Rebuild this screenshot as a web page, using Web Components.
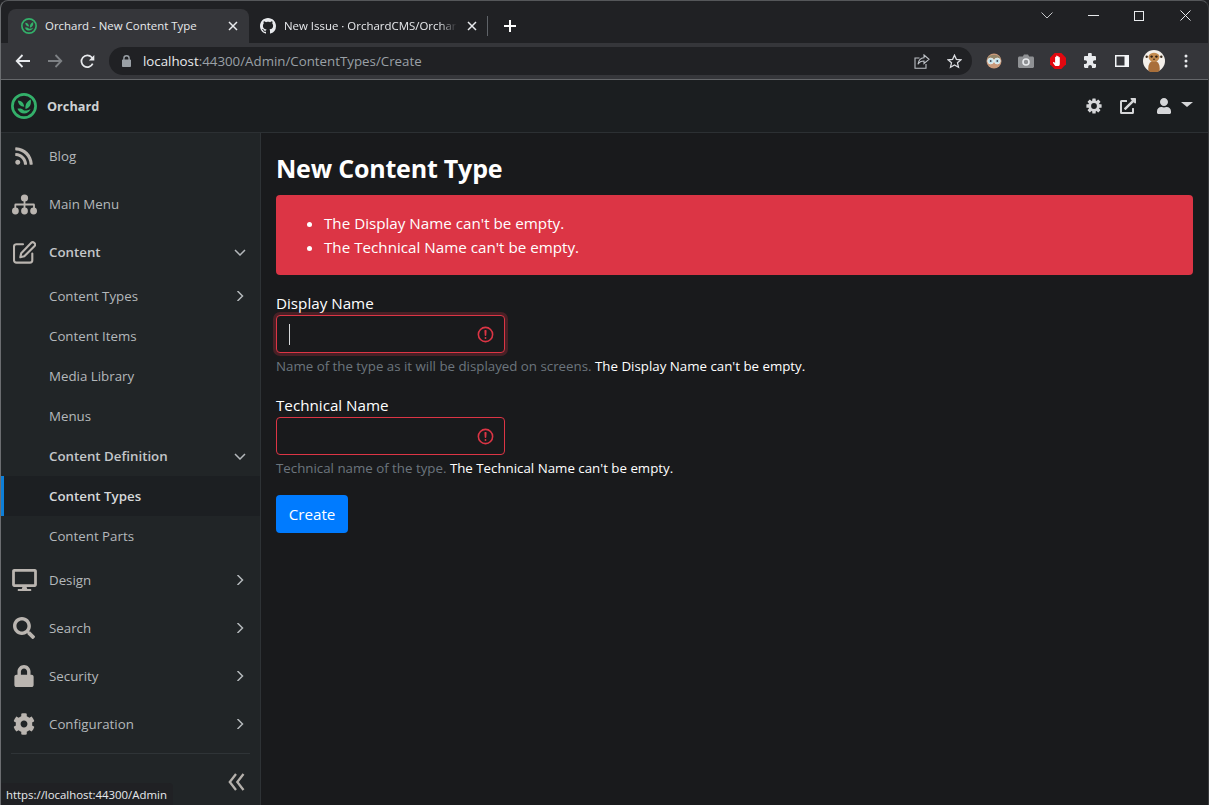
<!DOCTYPE html>
<html lang="en">
<head>
<meta charset="utf-8">
<title>Orchard - New Content Type</title>
<style>
  html, body { margin: 0; height: 100%; overflow: hidden; background: #202124; }
  body { font-family: "Open Sans", "Liberation Sans", sans-serif; }
</style>
</head>
<body>
<browser-window>
  <tab-strip></tab-strip>
  <browser-toolbar></browser-toolbar>
  <app-header></app-header>
  <div style="display:flex;flex:1;min-height:0">
    <side-nav>
      <nav-item icon="rss" label="Blog"></nav-item>
      <nav-item icon="sitemap" label="Main Menu"></nav-item>
      <nav-item icon="edit" label="Content" chevron="down" strong></nav-item>
      <nav-item sub label="Content Types" chevron="right"></nav-item>
      <nav-item sub label="Content Items"></nav-item>
      <nav-item sub label="Media Library"></nav-item>
      <nav-item sub label="Menus"></nav-item>
      <nav-item sub label="Content Definition" chevron="down" strong></nav-item>
      <nav-item sub label="Content Types" active strong></nav-item>
      <nav-item sub label="Content Parts"></nav-item>
      <nav-item icon="desktop" label="Design" chevron="right"></nav-item>
      <nav-item icon="search" label="Search" chevron="right"></nav-item>
      <nav-item icon="lock" label="Security" chevron="right"></nav-item>
      <nav-item icon="cog" label="Configuration" chevron="right"></nav-item>
    </side-nav>
    <content-page>
      <alert-box slot="alert">
        <li>The Display Name can't be empty.</li>
        <li>The Technical Name can't be empty.</li>
      </alert-box>
      <form-field label="Display Name" error="The Display Name can't be empty." focused>Name of the type as it will be displayed on screens.</form-field>
      <form-field label="Technical Name" error="The Technical Name can't be empty.">Technical name of the type.</form-field>
      <primary-button>Create</primary-button>
    </content-page>
  </div>
  <status-bubble>https://localhost:44300/Admin</status-bubble>
</browser-window>

<script>
const ICONS = {
  rss: ['0 0 448 512', '<path d="M128.081 415.959c0 35.369-28.672 64.041-64.041 64.041S0 451.328 0 415.959s28.672-64.041 64.041-64.041 64.04 28.673 64.04 64.041zm175.66 47.25c-8.354-154.6-132.185-278.587-286.95-286.95C7.656 175.765 0 183.105 0 192.253v48.069c0 8.415 6.49 15.472 14.887 16.018 111.832 7.284 201.473 96.702 208.772 208.772.547 8.397 7.604 14.887 16.018 14.887h48.069c9.149.001 16.489-7.655 15.995-16.79zm144.249.288C439.596 229.677 251.465 40.445 16.503 32.01 7.473 31.686 0 38.981 0 48.016v48.068c0 8.625 6.835 15.645 15.453 15.999 191.179 7.839 344.627 161.316 352.465 352.465.353 8.618 7.373 15.453 15.999 15.453h48.068c9.034-.001 16.329-7.474 16.005-16.504z"/>', 22, 20],
  sitemap: ['0 0 25 21', '<circle cx="12.5" cy="4" r="3.6"/><circle cx="3.4" cy="17" r="3.4"/><circle cx="12.5" cy="17" r="3.4"/><circle cx="21.6" cy="17" r="3.4"/><path d="M11.6 6h1.8v3.6h8.2a1.3 1.3 0 0 1 1.3 1.3V15h-1.8v-3.6h-7.7V15h-1.8v-3.6H4.2V15H2.4v-4.1a1.3 1.3 0 0 1 1.3-1.3h7.9z"/>', 25, 21],
  edit: ['0 0 23 23', '<path fill="none" stroke="currentColor" stroke-width="2.1" stroke-linecap="round" d="M10 3.3H3.4A2.4 2.4 0 0 0 1 5.7v13.5a2.4 2.4 0 0 0 2.4 2.4h13.5a2.4 2.4 0 0 0 2.4-2.4v-6.7"/><path fill="none" stroke="currentColor" stroke-width="2.1" stroke-linejoin="round" d="M18.3 1.7a1.9 1.9 0 0 1 2.7 0l.6.6a1.9 1.9 0 0 1 0 2.7L11.3 15.3l-4 .9.9-4z"/>', 23, 23],
  desktop: ['0 0 576 512', '<path d="M528 0H48C21.5 0 0 21.5 0 48v320c0 26.5 21.5 48 48 48h192l-16 48h-72c-13.3 0-24 10.7-24 24s10.7 24 24 24h272c13.3 0 24-10.7 24-24s-10.7-24-24-24h-72l-16-48h192c26.5 0 48-21.5 48-48V48c0-26.5-21.5-48-48-48zm-16 352H64V64h448v288z"/>', 25, 22],
  search: ['0 0 512 512', '<path d="M505 442.7L405.3 343c-4.5-4.5-10.6-7-17-7H372c27.6-35.3 44-79.7 44-128C416 93.1 322.9 0 208 0S0 93.1 0 208s93.1 208 208 208c48.3 0 92.7-16.4 128-44v16.3c0 6.4 2.5 12.5 7 17l99.7 99.7c9.4 9.4 24.6 9.4 33.9 0l28.3-28.3c9.4-9.4 9.4-24.6.1-34zM208 336c-70.7 0-128-57.2-128-128 0-70.7 57.2-128 128-128 70.7 0 128 57.2 128 128 0 70.7-57.2 128-128 128z"/>', 22, 22],
  lock: ['0 0 448 512', '<path d="M400 224h-24v-72C376 68.2 307.8 0 224 0S72 68.2 72 152v72H48c-26.5 0-48 21.5-48 48v192c0 26.5 21.5 48 48 48h352c26.5 0 48-21.5 48-48V272c0-26.5-21.5-48-48-48zm-104 0H152v-72c0-39.7 32.3-72 72-72s72 32.3 72 72v72z"/>', 20, 22],
  cog: ['0 0 512 512', '<path d="M487.4 315.7l-42.6-24.6c4.3-23.2 4.3-47 0-70.2l42.6-24.6c4.9-2.8 7.1-8.6 5.5-14-11.1-35.6-30-67.8-54.7-94.6-3.8-4.1-10-5.1-14.8-2.3L380.8 110c-17.9-15.4-38.5-27.3-60.8-35.1V25.8c0-5.6-3.9-10.5-9.4-11.7-36.7-8.2-74.3-7.8-109.2 0-5.5 1.2-9.4 6.1-9.4 11.7V75c-22.2 7.9-42.8 19.8-60.8 35.1L88.7 85.5c-4.9-2.8-11-1.9-14.8 2.3-24.7 26.7-43.6 58.9-54.7 94.6-1.7 5.4.6 11.2 5.5 14L67.3 221c-4.3 23.2-4.3 47 0 70.2l-42.6 24.6c-4.9 2.8-7.1 8.6-5.5 14 11.1 35.6 30 67.8 54.7 94.6 3.8 4.1 10 5.1 14.8 2.3l42.6-24.6c17.9 15.4 38.5 27.3 60.8 35.1v49.2c0 5.6 3.9 10.5 9.4 11.7 36.7 8.2 74.3 7.8 109.2 0 5.5-1.2 9.4-6.1 9.4-11.7v-49.2c22.2-7.9 42.8-19.8 60.8-35.1l42.6 24.6c4.9 2.8 11 1.9 14.8-2.3 24.7-26.7 43.6-58.9 54.7-94.6 1.5-5.5-.7-11.3-5.6-14.1zM256 336c-44.1 0-80-35.9-80-80s35.9-80 80-80 80 35.9 80 80-35.9 80-80 80z"/>', 22, 22],
  user: ['0 0 448 512', '<path d="M224 256c70.7 0 128-57.3 128-128S294.7 0 224 0 96 57.3 96 128s57.3 128 128 128zm89.6 32h-16.7c-22.2 10.2-46.9 16-72.9 16s-50.6-5.8-72.9-16h-16.7C60.2 288 0 348.2 0 422.4V464c0 26.5 21.5 48 48 48h352c26.5 0 48-21.5 48-48v-41.6c0-74.2-60.2-134.4-134.4-134.4z"/>', 14, 16],
  external: ['0 0 512 512', '<path d="M432,320H400a16,16,0,0,0-16,16V448H64V128H208a16,16,0,0,0,16-16V80a16,16,0,0,0-16-16H48A48,48,0,0,0,0,112V464a48,48,0,0,0,48,48H400a48,48,0,0,0,48-48V336A16,16,0,0,0,432,320ZM488,0h-128c-21.37,0-32.05,25.91-17,41l35.73,35.73L135,320.37a24,24,0,0,0,0,34L157.67,377a24,24,0,0,0,34,0L435.28,133.32,471,169c15,15,41,4.5,41-17V24A24,24,0,0,0,488,0Z"/>', 16, 16],
  github: ['0 0 16 16', '<path d="M8 0C3.58 0 0 3.58 0 8c0 3.54 2.29 6.53 5.47 7.59.4.07.55-.17.55-.38 0-.19-.01-.82-.01-1.49-2.01.37-2.53-.49-2.69-.94-.09-.23-.48-.94-.82-1.13-.28-.15-.68-.52-.01-.53.63-.01 1.08.58 1.23.82.72 1.21 1.87.87 2.33.66.07-.52.28-.87.51-1.07-1.78-.2-3.64-.89-3.64-3.95 0-.87.31-1.59.82-2.15-.08-.2-.36-1.02.08-2.12 0 0 .67-.21 2.2.82.64-.18 1.32-.27 2-.27.68 0 1.36.09 2 .27 1.53-1.04 2.2-.82 2.2-.82.44 1.1.16 1.92.08 2.12.51.56.82 1.27.82 2.15 0 3.07-1.87 3.75-3.65 3.95.29.25.54.73.54 1.48 0 1.07-.01 1.93-.01 2.2 0 .21.15.46.55.38A8.013 8.013 0 0016 8c0-4.42-3.58-8-8-8z"/>', 16, 16],
};

function icon(name, w, h) {
  const [box, body, dw, dh] = ICONS[name];
  return `<svg viewBox="${box}" width="${w || dw}" height="${h || dh}" fill="currentColor" aria-hidden="true">${body}</svg>`;
}

// ring and three leaves, used by the favicon and the header
const LOGO = `<circle cx="13" cy="13" r="11.6" fill="none" stroke="#33b06a" stroke-width="2.7"/>
  <path fill="#33b06a" d="M6.800 7.600c3.800.2 5.900 2.200 6.400 6.200-3.800-.2-6-2.300-6.400-6.200z"/>
  <path fill="#33b06a" d="M19.800 6.400c.7 5.200-1 8.300-5.300 9.500-.5-4.300 1.300-7.700 5.300-9.500z"/>
  <path fill="#33b06a" d="M6.400 15.700c2.500-.6 5-.1 6.700 1.800 2 .3 4.300-.4 6.500-1.500-1.200 2.900-3.500 4.500-6.400 4.500-3 0-5.500-1.900-6.800-4.800z"/>`;

class BrowserWindow extends HTMLElement {
  connectedCallback() {
    if (this.shadowRoot) return;
    this.attachShadow({ mode: 'open' }).innerHTML = `
      <style>
        :host {
          display: flex;
          flex-direction: column;
          position: relative;
          box-sizing: border-box;
          width: 1209px;
          height: 805px;
          overflow: hidden;
          border-top: 1px solid #55575a;
          border-left: 1px solid #6b6d70;
          border-right: 1px solid #3a3b3d;
          border-radius: 8px 8px 0 0;
          background: #202124;
        }
      </style>
      <slot></slot>`;
  }
}

class TabStrip extends HTMLElement {
  connectedCallback() {
    if (this.shadowRoot) return;
    this.attachShadow({ mode: 'open' }).innerHTML = `
      <style>
        :host {
          display: flex;
          align-items: flex-end;
          height: 42px;
          flex: none;
          color: #e8eaed;
          font-size: 11.450px;
          padding-left: 7px;
        }
        .tab {
          display: flex;
          align-items: center;
          box-sizing: border-box;
          width: 241px;
          height: 34px;
          padding-left: 13px;
          border-radius: 8px 8px 0 0;
        }
        .tab.on { background: #35363a; }
        .fav { width: 16px; height: 16px; margin-right: 8px; flex: none; }
        .fav svg { display: block; }
        .name { flex: 1; white-space: nowrap; overflow: hidden; line-height: 16px; }
        .off .name { -webkit-mask-image: linear-gradient(to left, transparent, #000 18px); mask-image: linear-gradient(to left, transparent, #000 18px); }
        .x { width: 10px; height: 10px; margin: 0 11px 0 10px; flex: none; }
        .off { padding-left: 11px; width: 239px; }
        .sep { width: 1px; height: 20px; background: #5f6368; margin: 0 0 7px -1px; }
        .plus { width: 12px; height: 12px; margin: 0 0 11px 16px; }
        .ctl { margin-left: auto; display: flex; align-self: flex-start; }
        .ctl span { width: 46px; height: 29px; display: flex; align-items: center; justify-content: center; }
      </style>
      <div class="tab on">
        <span class="fav"><svg viewBox="0 0 26 26" width="16" height="16">${LOGO}</svg></span>
        <span class="name">Orchard - New Content Type</span>
        <svg class="x" viewBox="0 0 10 10"><path d="M1 1l8 8M9 1L1 9" stroke="#e8eaed" stroke-width="1.5"/></svg>
      </div>
      <div class="tab off">
        <span class="fav">${icon('github')}</span>
        <span class="name">New Issue · OrchardCMS/OrchardCore</span>
        <svg class="x" viewBox="0 0 10 10"><path d="M1 1l8 8M9 1L1 9" stroke="#e8eaed" stroke-width="1.5"/></svg>
      </div>
      <div class="sep"></div>
      <svg class="plus" viewBox="0 0 12 12"><path d="M6 0v12M0 6h12" stroke="#fff" stroke-width="2"/></svg>
      <div class="ctl">
        <span><svg width="12" height="7" viewBox="0 0 12 7"><path d="M.5.5L6 6 11.500.5" fill="none" stroke="#c4c6c9"/></svg></span>
        <span><svg width="11" height="1"><rect width="11" height="1" fill="#e8eaed"/></svg></span>
        <span><svg width="10" height="10"><rect x=".5" y=".5" width="9" height="9" fill="none" stroke="#e8eaed"/></svg></span>
        <span><svg width="11" height="11" viewBox="0 0 11 11"><path d="M.5.500l10 10M10.500.5l-10 10" stroke="#e8eaed"/></svg></span>
      </div>`;
  }
}

class BrowserToolbar extends HTMLElement {
  connectedCallback() {
    if (this.shadowRoot) return;
    this.attachShadow({ mode: 'open' }).innerHTML = `
      <style>
        :host {
          display: flex;
          align-items: center;
          box-sizing: border-box;
          height: 37px;
          flex: none;
          background: #35363a;
          border-bottom: 1px solid #65676a;
          color: #dadce0;
        }
        .btn { width: 32px; height: 28px; display: flex; align-items: center; justify-content: center; flex: none; }
        .nav { margin-left: 6px; }
        .omni {
          flex: none;
          width: 863px;
          height: 28px;
          margin-left: 6px;
          margin-right: 6px;
          border-radius: 14px;
          background: #202124;
          display: flex;
          align-items: center;
          padding: 0 2px 0 13px;
          box-sizing: border-box;
          font-size: 13.300px;
        }
        .url { margin-left: 12px; color: #9aa0a6; white-space: nowrap; flex: 1; }
        .url b { font-weight: 400; color: #e8eaed; }
        .avatar { width: 22px; height: 22px; }
      </style>
      <div class="btn nav"><svg width="16" height="14" viewBox="0 0 16 14"><path d="M15 7H2M7.500 1L1.700 7l5.800 6" fill="none" stroke="#e8eaed" stroke-width="1.800"/></svg></div>
      <div class="btn"><svg width="16" height="14" viewBox="0 0 16 14"><path d="M1 7h13M8.500 1l5.800 6-5.800 6" fill="none" stroke="#7d8084" stroke-width="1.800"/></svg></div>
      <div class="btn"><svg width="15" height="15" viewBox="0 0 15 15"><path d="M12.700 9.700A5.900 5.900 0 1 1 11.700 3.300L13.400 5" fill="none" stroke="#e8eaed" stroke-width="1.700"/><path d="M14.300 1v5.500H8.800z" fill="#e8eaed"/></svg></div>
      <div class="omni">
        <svg width="9" height="12" viewBox="0 0 9 12" fill="#9aa0a6"><path d="M1.200 4.500V3.300a3.300 3.300 0 0 1 6.600 0v1.200h.4c.4 0 .8.400.8.800v5.900c0 .4-.4.800-.8.800H.8c-.4 0-.8-.4-.8-.8V5.300c0-.4.400-.8.800-.8zm1.400 0h3.800V3.300a1.900 1.900 0 0 0-3.800 0z"/></svg>
        <span class="url"><b>localhost</b>:44300/Admin/ContentTypes/Create</span>
        <div class="btn"><svg width="16" height="15" viewBox="0 0 16 15" fill="none" stroke="#bdc1c6" stroke-width="1.100"><path d="M5.500 4H1v10.300h11V10"/><path d="M10 1l5 4.300-5 4.200V7C7.500 7 5.300 8 4 10.200 4.400 6.800 6.500 4 10 3.700z"/></svg></div>
        <div class="btn"><svg width="15" height="15" viewBox="0 0 15 15"><path d="M7.500 1.200l1.900 4.100 4.500.5-3.400 3 1 4.400-4-2.300-4 2.300 1-4.400-3.400-3 4.500-.5z" fill="none" stroke="#dadce0" stroke-width="1.300"/></svg></div>
      </div>
      <div class="btn"><svg width="16" height="16" viewBox="0 0 16 16"><circle cx="8" cy="8" r="7.500" fill="#c9997a"/><path d="M1.500 6C2 .5 14 .5 14.500 6z" fill="#93866a"/><circle cx="4.700" cy="8" r="2.900" fill="#bfe3ea" stroke="#e6eaec"/><circle cx="11.300" cy="8" r="2.900" fill="#bfe3ea" stroke="#e6eaec"/><circle cx="4.700" cy="8" r=".9" fill="#445"/><circle cx="11.300" cy="8" r=".9" fill="#445"/></svg></div>
      <div class="btn"><svg width="16" height="14" viewBox="0 0 16 14"><path d="M1.500 2.500h3.300L6 .5h4l1.200 2h3.300c.8 0 1.500.7 1.500 1.500v8.500c0 .8-.7 1.500-1.500 1.500h-13C.7 14 0 13.300 0 12.500V4c0-.8.700-1.500 1.500-1.500z" fill="#8f9194"/><circle cx="8" cy="8" r="3" fill="none" stroke="#e8eaed" stroke-width="1.600"/></svg></div>
      <div class="btn"><svg width="16" height="16" viewBox="0 0 16 16"><path d="M4.700 0h6.600L16 4.700v6.600L11.300 16H4.700L0 11.300V4.700z" fill="#e2080f"/><path d="M5.300 13c-1-1.300-2.300-3-2.300-3.600 0-.5.600-.7 1-.3l1.100 1V4.300c0-.8 1.100-.8 1.100 0V3c0-.8 1.200-.8 1.200 0v.6c0-.8 1.200-.8 1.200 0v.9c0-.8 1.200-.8 1.200 0V11c0 1-.6 2-1.200 2z" fill="#fff"/></svg></div>
      <div class="btn"><svg width="16" height="16" viewBox="0 0 16 16"><path d="M6 1.500a1.900 1.900 0 0 1 3.800 0V3h3c.6 0 1.200.6 1.200 1.200v3h-1.200a1.900 1.900 0 0 0 0 3.800H14v2.800c0 .6-.6 1.200-1.200 1.200H10v-1.200a1.900 1.900 0 0 0-3.800 0V15H3.200C2.500 15 2 14.400 2 13.800V11h1.200a1.900 1.900 0 0 0 0-3.800H2V4.200C2 3.600 2.500 3 3.200 3H6z" fill="#e8eaed"/></svg></div>
      <div class="btn"><svg width="14" height="12" viewBox="0 0 14 12"><rect width="14" height="12" fill="#f4f6f8"/><rect x="1.500" y="1.500" width="8" height="9" fill="#35363a"/></svg></div>
      <div class="btn"><svg class="avatar" viewBox="0 0 22 22"><circle cx="11" cy="11" r="11" fill="#f3efe9"/><path d="M5.500 21c-.8-5 .6-8.500 3.500-10h4c2.900 1.500 4.300 5 3.500 10a11 11 0 0 1-11 0z" fill="#a96f3a"/><path d="M5.500 6.500C6.500 1.500 15.500 1.500 16.500 6.500 16.500 9.500 14 12 11 12S5.500 9.500 5.500 6.500z" fill="#c48c50"/><circle cx="8.600" cy="6.600" r="1.200" fill="#2b1c10"/><circle cx="13.400" cy="6.600" r="1.200" fill="#2b1c10"/><circle cx="11" cy="9.300" r=".8" fill="#2b1c10"/><circle cx="3.700" cy="6.800" r="1.200" fill="#3a2a1a"/><circle cx="18.300" cy="6.800" r="1.200" fill="#3a2a1a"/></svg></div>
      <div class="btn"><svg width="4" height="14" viewBox="0 0 4 14" fill="#e8eaed"><circle cx="2" cy="2" r="1.500"/><circle cx="2" cy="7" r="1.500"/><circle cx="2" cy="12" r="1.500"/></svg></div>`;
  }
}

class AppHeader extends HTMLElement {
  connectedCallback() {
    if (this.shadowRoot) return;
    const teeth = [0, 45, 90, 135, 180, 225, 270, 315]
      .map(a => `<rect x="6.300" y=".4" width="3.400" height="3.400" rx=".5" transform="rotate(${a} 8 8)"/>`).join('');
    this.attachShadow({ mode: 'open' }).innerHTML = `
      <style>
        :host {
          display: flex;
          align-items: center;
          box-sizing: border-box;
          height: 53px;
          flex: none;
          background: #1b1e20;
          border-bottom: 1px solid #2c3033;
          padding-left: 10px;
          color: #d5d6d8;
        }
        .brand { margin-left: 10px; font-weight: 700; font-size: 12.700px; color: #ced1d3; }
        .tools { margin-left: auto; display: flex; align-items: center; margin-right: 15px; }
        .tools svg { display: block; }
        .tools > * { flex: none; }
        .cog { margin-right: 18px; }
        .ext { margin-right: 21px; }
        .caret { width: 0; height: 0; margin-left: 10px; border: 6px solid transparent; border-top: 5px solid #d5d6d8; border-bottom: 0; margin-bottom: 3px; }
      </style>
      <svg width="26" height="26" viewBox="0 0 26 26">${LOGO}</svg>
      <span class="brand">Orchard</span>
      <div class="tools">
        <span class="cog"><svg width="16" height="16" viewBox="0 0 16 16" fill="currentColor">${teeth}<circle cx="8" cy="8" r="4.300" fill="none" stroke="currentColor" stroke-width="2.800"/></svg></span>
        <span class="ext">${icon('external', 16, 16)}</span>
        <span>${icon('user', 14, 16)}</span>
        <span class="caret"></span>
      </div>`;
  }
}

class SideNav extends HTMLElement {
  connectedCallback() {
    if (this.shadowRoot) return;
    this.attachShadow({ mode: 'open' }).innerHTML = `
      <style>
        :host {
          display: flex;
          flex-direction: column;
          box-sizing: border-box;
          width: 260px;
          flex: none;
          background: #212527;
          border-right: 1px solid #2e3235;
        }
        ::slotted(:first-child) { margin-top: -1px; }
        .foot {
          margin: 5px 10px 0 10px;
          border-top: 1px solid #2f3437;
          flex: 1;
          display: flex;
          justify-content: flex-end;
          padding: 19px 5px 0 0;
        }
      </style>
      <slot></slot>
      <div class="foot">
        <svg width="17" height="18" viewBox="0 0 17 18" fill="none" stroke="#b5b1ac" stroke-width="2.300"><path d="M8 1L1.800 9 8 17M15.500 1L9.300 9l6.200 8"/></svg>
      </div>`;
  }
}

class NavItem extends HTMLElement {
  connectedCallback() {
    if (this.shadowRoot) return;
    const name = this.getAttribute('icon');
    const chev = this.getAttribute('chevron');
    const chevPath = chev === 'down' ? 'M1 1l5 5 5-5' : 'M3.500 0l5 5-5 5';
    this.attachShadow({ mode: 'open' }).innerHTML = `
      <style>
        :host {
          display: flex;
          align-items: center;
          height: 48px;
          flex: none;
          box-sizing: border-box;
          position: relative;
          color: #b4b8bb;
          font-size: 13.300px;
          padding-right: 14px;
        }
        :host([sub]) { height: 40px; }
        :host([strong]) { font-weight: 600; color: #c4c7ca; }
        :host([active]) { background: #1c1f22; color: #d6d8da; }
        :host([active])::before {
          content: "";
          position: absolute;
          left: 0;
          top: 0;
          bottom: 0;
          width: 3px;
          background: #0d7fd8;
        }
        .ic { width: 46px; margin-right: 2px; display: flex; justify-content: center; color: #bab5b0; flex: none; }
        .ic svg { display: block; }
        .lbl { flex: 1; white-space: nowrap; }
        .ch { flex: none; }
      </style>
      <span class="ic">${name ? icon(name) : ''}</span>
      <span class="lbl">${this.getAttribute('label')}</span>
      ${chev ? `<svg class="ch" width="12" height="${chev === 'down' ? 7 : 10}" viewBox="0 0 12 ${chev === 'down' ? 7 : 10}" fill="none" stroke="#b4b8bb" stroke-width="1.500"><path d="${chevPath}"/></svg>` : ''}`;
  }
}

class ContentPage extends HTMLElement {
  connectedCallback() {
    if (this.shadowRoot) return;
    this.attachShadow({ mode: 'open' }).innerHTML = `
      <style>
        :host {
          display: block;
          flex: 1;
          min-width: 0;
          box-sizing: border-box;
          background: #191a1c;
          padding: 16px 15px 0 15px;
          color: #fff;
          font-size: 15.200px;
        }
        h1 { margin: 0 0 8px; font-size: 25px; line-height: 38px; font-weight: 700; letter-spacing: -.2px; color: #fff; }
      </style>
      <h1>New Content Type</h1>
      <slot name="alert"></slot>
      <slot></slot>`;
  }
}

class AlertBox extends HTMLElement {
  connectedCallback() {
    if (this.shadowRoot) return;
    this.attachShadow({ mode: 'open' }).innerHTML = `
      <style>
        :host {
          display: block;
          background: #dc3545;
          border-radius: 4px;
          padding: 16px 20px 16px 48px;
          margin-bottom: 16px;
          color: #fff;
          font-size: 15.200px;
          line-height: 24px;
        }
        ul { margin: 0; padding: 0; }
        ::slotted(li) { display: list-item; }
      </style>
      <ul><slot></slot></ul>`;
  }
}

class FormField extends HTMLElement {
  connectedCallback() {
    if (this.shadowRoot) return;
    this.attachShadow({ mode: 'open' }).innerHTML = `
      <style>
        :host { display: block; margin-bottom: 16px; }
        label { display: block; font-size: 15.200px; line-height: 24px; margin-bottom: 0; color: #fff; }
        .box {
          position: relative;
          box-sizing: border-box;
          width: 229px;
          height: 38px;
          display: flex;
          align-items: center;
          border: 1px solid #dc3545;
          border-radius: 4px;
          background: #191a1c;
          padding: 0 9px 0 12px;
        }
        :host([focused]) .box { box-shadow: 0 0 0 3px rgba(220, 53, 69, .25); }
        input { flex: 1; min-width: 0; border: 0; outline: 0; background: none; padding: 0; color: #fff; font: inherit; }
        .caret { position: absolute; left: 12px; top: 8px; width: 1px; height: 21px; background: #d6d8da; display: none; }
        :host([focused]) .caret { display: block; }
        .help { font-size: 13.300px; line-height: 21px; margin-top: 3px; color: #6c757d; white-space: nowrap; }
        .help b { font-weight: 400; color: #fff; }
      </style>
      <label>${this.getAttribute('label')}</label>
      <div class="box">
        <input type="text" aria-label="${this.getAttribute('label')}">
        <span class="caret"></span>
        <svg width="19" height="19" viewBox="0 0 12 12" fill="none" stroke="#dc3545"><circle cx="6" cy="6" r="4.500"/><path stroke-linejoin="round" d="M5.800 3.600h.4L6 6.500z"/><circle cx="6" cy="8.200" r=".6" fill="#dc3545" stroke="none"/></svg>
      </div>
      <div class="help"><slot></slot> <b>${this.getAttribute('error')}</b></div>`;
  }
}

class PrimaryButton extends HTMLElement {
  connectedCallback() {
    if (this.shadowRoot) return;
    this.attachShadow({ mode: 'open' }).innerHTML = `
      <style>
        :host {
          display: inline-flex;
          align-items: center;
          justify-content: center;
          box-sizing: border-box;
          width: 72px;
          height: 38px;
          background: #007bff;
          border-radius: 4px;
          color: #fff;
          font-size: 15.200px;
        }
      </style>
      <slot></slot>`;
  }
}

class StatusBubble extends HTMLElement {
  connectedCallback() {
    if (this.shadowRoot) return;
    this.attachShadow({ mode: 'open' }).innerHTML = `
      <style>
        :host {
          position: absolute;
          left: 0;
          bottom: 0;
          height: 22px;
          display: flex;
          align-items: center;
          padding: 0 6px 0 5px;
          background: #202124;
          border-top-right-radius: 4px;
          color: #e8eaed;
          font-size: 11.400px;
        }
      </style>
      <slot></slot>`;
  }
}

customElements.define('browser-window', BrowserWindow);
customElements.define('tab-strip', TabStrip);
customElements.define('browser-toolbar', BrowserToolbar);
customElements.define('app-header', AppHeader);
customElements.define('side-nav', SideNav);
customElements.define('nav-item', NavItem);
customElements.define('content-page', ContentPage);
customElements.define('alert-box', AlertBox);
customElements.define('form-field', FormField);
customElements.define('primary-button', PrimaryButton);
customElements.define('status-bubble', StatusBubble);
</script>
</body>
</html>
